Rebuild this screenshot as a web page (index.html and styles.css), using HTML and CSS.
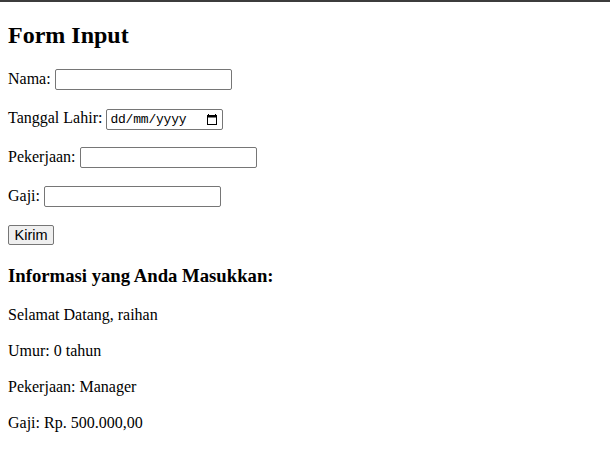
FILE: index.html
```html
<!DOCTYPE html>
<html>
<head>
<meta charset="utf-8">
<link rel="stylesheet" href="styles.css">
</head>
<body>
<div class="topbar"></div>
<main class="page">
  <h2 class="title">Form Input</h2>
  <form class="form">
    <p class="row">Nama: <input class="field" type="text"></p>
    <p class="row">Tanggal Lahir: <span class="date"><span class="date-text">dd/mm/yyyy</span><svg class="cal" width="10" height="11" viewBox="0 0 10 11"><rect x="1" y="0" width="1" height="2" fill="#000"/><rect x="8" y="0" width="1" height="2" fill="#000"/><rect x="0.5" y="1.5" width="9" height="9" fill="none" stroke="#000" stroke-width="1"/><rect x="0" y="1" width="10" height="2.5" fill="#000"/></svg></span></p>
    <p class="row">Pekerjaan: <input class="field" type="text"></p>
    <p class="row">Gaji: <input class="field" type="text"></p>
    <p class="row"><button class="btn" type="button">Kirim</button></p>
  </form>
  <h3 class="subtitle">Informasi yang Anda Masukkan:</h3>
  <p class="info">Selamat Datang, raihan</p>
  <p class="info">Umur: 0 tahun</p>
  <p class="info">Pekerjaan: Manager</p>
  <p class="info">Gaji: Rp. 500.000,00</p>
</main>
</body>
</html>
```
FILE: styles.css
```css
html, body {
  margin: 0;
  padding: 0;
  background: #fff;
}
body {
  font-family: "Liberation Serif", "Times New Roman", serif;
  font-size: 16px;
  color: #000;
}
.topbar {
  height: 2px;
  background: #3c3c3c;
}
.page {
  padding: 1px 8px 8px;
}
.title {
  font-size: 24px;
  font-weight: bold;
  margin: 19px 0 18px;
}
.form {
  margin: 0;
}
.row {
  height: 23px;
  line-height: 23px;
  margin: 16px 0;
  white-space: nowrap;
}
.field {
  font-family: "Liberation Sans", Arial, sans-serif;
  font-size: 13.33px;
  width: 177px;
  height: 21px;
  box-sizing: border-box;
  border: 1px solid #767676;
  border-radius: 2px;
  padding: 1px 2px;
  margin: 0;
  vertical-align: baseline;
}
.date {
  display: inline-flex;
  align-items: center;
  justify-content: space-between;
  width: 117px;
  height: 21px;
  box-sizing: border-box;
  border: 1px solid #767676;
  border-radius: 2px;
  padding: 1px 5px 0 3px;
  font-family: "Liberation Mono", "DejaVu Sans Mono", monospace;
  font-size: 13px;
  line-height: 16px;
  vertical-align: baseline;
}
.date-text {
  letter-spacing: -0.2px;
}
.cal {
  display: block;
  margin-top: -1px;
}
.btn {
  font-family: "Liberation Sans", Arial, sans-serif;
  font-size: 14.5px;
  line-height: normal;
  width: 46px;
  height: 20px;
  padding: 0 4px;
  margin: 0;
  border: 1px solid #767676;
  border-radius: 2px;
  background: #efefef;
  color: #000;
}
.subtitle {
  font-size: 18.72px;
  margin: 18.72px 0;
}
.info {
  line-height: 20px;
  margin: 16px 0;
}
```
